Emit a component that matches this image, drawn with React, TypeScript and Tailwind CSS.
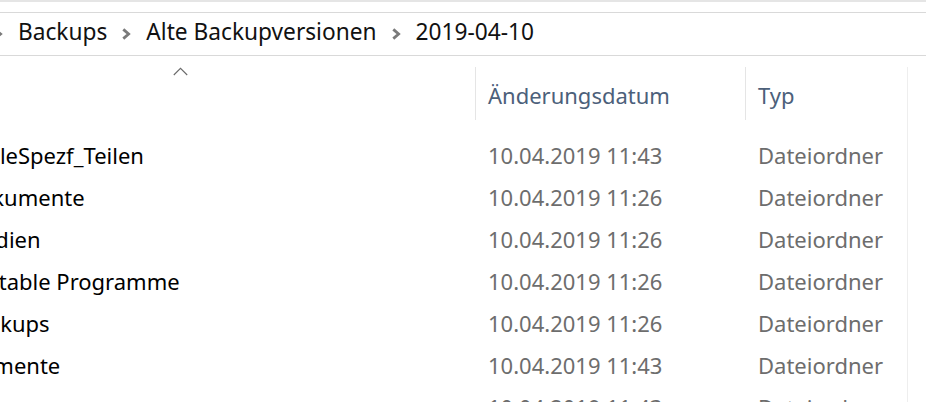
import React from 'react';

// One entry per folder row in the details view
interface Entry {
  name: string;
  modified: string;
  type: string;
}

const entries: Entry[] = [
  { name: 'SeeleSpezf_Teilen', modified: '10.04.2019 11:43', type: 'Dateiordner' },
  { name: 'Dokumente', modified: '10.04.2019 11:26', type: 'Dateiordner' },
  { name: 'Medien', modified: '10.04.2019 11:26', type: 'Dateiordner' },
  { name: 'Portable Programme', modified: '10.04.2019 11:26', type: 'Dateiordner' },
  { name: 'Backups', modified: '10.04.2019 11:26', type: 'Dateiordner' },
  { name: 'Elemente', modified: '10.04.2019 11:43', type: 'Dateiordner' },
  { name: 'Apps', modified: '10.04.2019 11:43', type: 'Dateiordner' },
];

const crumbs = ['Backups', 'Alte Backupversionen', '2019-04-10'];

function Chevron({ className = '' }: { className?: string }) {
  return (
    <svg width="10" height="12" viewBox="0 0 10 12" className={className}>
      <path d="M2.3 1.4 L7.6 6 L2.3 10.6" fill="none" stroke="#7a7a7a" strokeWidth="2.8" />
    </svg>
  );
}

function SortArrow() {
  return (
    <svg width="15" height="9" viewBox="0 0 15 9">
      <path d="M0.8 8 L7.5 1.3 L14.2 8" fill="none" stroke="#6a6a6a" strokeWidth="1.1" />
    </svg>
  );
}

export default function App() {
  return (
    <div
      className="w-[926px] h-[402px] overflow-hidden bg-white text-[22px] leading-none"
      style={{ fontFamily: '"Noto Sans", "Open Sans", sans-serif' }}
    >
      {/* ribbon edge */}
      <div className="h-[12px] border-t-2 border-[#e5e5e5]" />

      {/* address bar */}
      <div className="h-[44px] border-y border-[#d9d9d9] flex items-center text-[#111] text-[22.7px]">
        <Chevron className="ml-[-7px] mr-[15px] shrink-0" />
        {crumbs.map((crumb, i) => (
          <React.Fragment key={crumb}>
            <span className="whitespace-nowrap pb-[3px]">{crumb}</span>
            {i < crumbs.length - 1 && <Chevron className="ml-[14px] mr-[15px] shrink-0" />}
          </React.Fragment>
        ))}
      </div>

      <div className="flex">
        <div className="w-[907px] shrink-0">
          {/* column headers */}
          <div className="flex h-[64px] text-[#4c607a]">
            <div className="w-[475px] pt-[11px] pl-[173px]">
              <SortArrow />
            </div>
            <div className="w-[270px] pt-[11px]">
              <div className="h-full border-l border-[#e5e5e5] flex items-center pl-[12px] pt-[3px]">
                Änderungsdatum
              </div>
            </div>
            <div className="flex-1 pt-[11px]">
              <div className="h-full border-l border-[#e5e5e5] flex items-center pl-[12px] pt-[3px]">
                Typ
              </div>
            </div>
          </div>

          {/* rows */}
          <div className="pt-[15px]">
            {entries.map((entry) => (
              <div key={entry.name + entry.modified} className="flex h-[42px] items-center">
                <div className="w-[475px] overflow-hidden whitespace-nowrap text-black">
                  <span className="block ml-[-37px] pb-[3px]">{entry.name}</span>
                </div>
                <div className="w-[270px] pl-[13px] text-[#6d6d6d] whitespace-nowrap pb-[3px]">
                  {entry.modified}
                </div>
                <div className="flex-1 pl-[13px] text-[#6d6d6d] whitespace-nowrap pb-[3px]">
                  {entry.type}
                </div>
              </div>
            ))}
          </div>
        </div>
        <div className="flex-1 mt-[11px] border-l border-[#eeeeee]" />
      </div>
    </div>
  );
}
